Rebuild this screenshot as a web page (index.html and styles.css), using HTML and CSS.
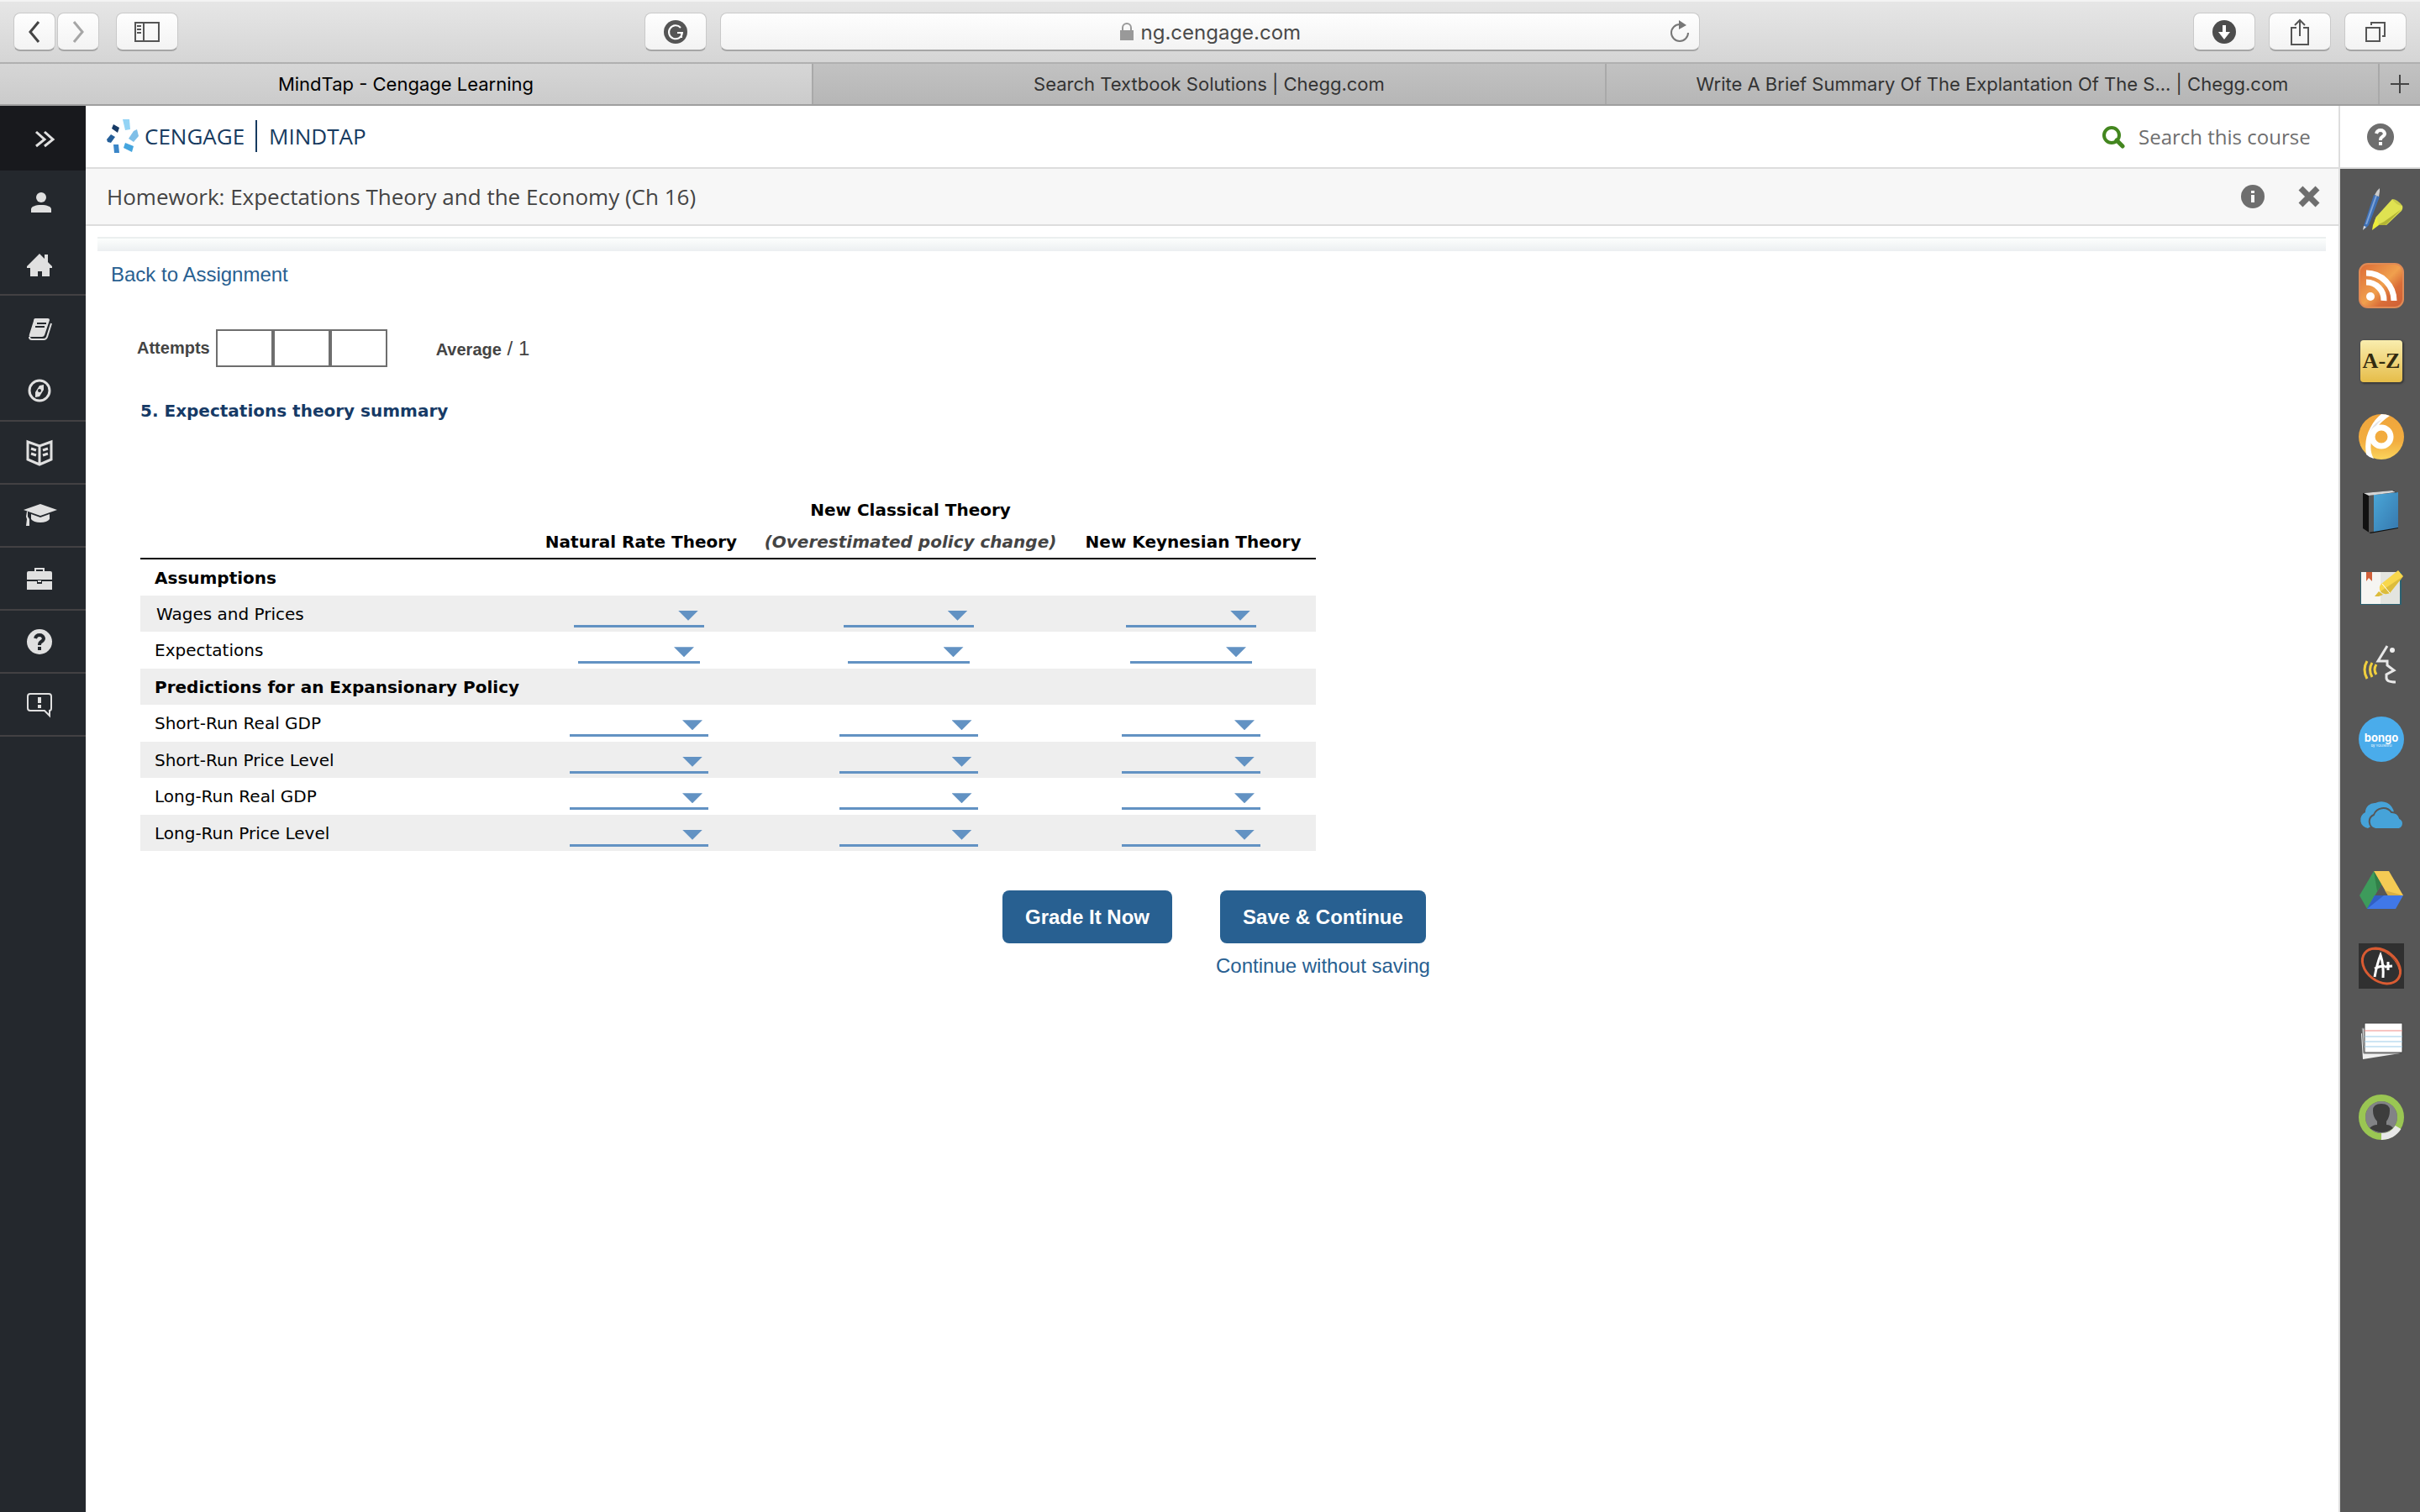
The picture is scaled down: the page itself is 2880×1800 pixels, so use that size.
FILE: index.html
```html
<!DOCTYPE html>
<html lang="en">
<head>
  <title>MindTap - Cengage Learning</title>
  <meta charset="utf-8">
  <meta name="viewport" content="width=device-width, initial-scale=1">
  <link rel="stylesheet" href="styles.css">
</head>

<body>
  <!-- browser bar -->
  <div class="toolbar">
    <div class="tools">
      <div class="pair">
        <button class="tool narrow" aria-label="Back"><svg width="28" height="28" viewBox="0 0 28 28"><path d="M19 2L9 14l10 12" fill="none" stroke="#444" stroke-width="3"/></svg></button>
        <button class="tool narrow" aria-label="Forward"><svg width="28" height="28" viewBox="0 0 28 28"><path d="M9 2l10 12L9 26" fill="none" stroke="#a6a6a6" stroke-width="3"/></svg></button>
      </div>
      <button class="tool" aria-label="Show sidebar"><svg width="32" height="26" viewBox="0 0 32 26"><path d="M2 2h28v22H2zM12 2v22" fill="none" stroke="#555" stroke-width="2"/><path d="M4 6h5M4 10h5M4 14h5" stroke="#555" stroke-width="2"/></svg></button>
      <button class="tool push" aria-label="Grammarly"><svg width="30" height="30" viewBox="0 0 30 30"><circle cx="15" cy="15" r="14" fill="#555"/><path d="M21 10a8 8 0 1 0 2 6h-6M22 15v7" fill="none" stroke="#fff" stroke-width="2"/></svg></button>
    </div>
    <div class="address">
      <svg width="18" height="22" viewBox="0 0 18 22"><path d="M1 9h16v12H1z" fill="#999"/><path d="M4 10V6a5 5 0 0 1 10 0v4" fill="none" stroke="#999" stroke-width="2"/></svg>
      <input class="url" type="text" value="ng.cengage.com" aria-label="Address">
      <button class="reload" aria-label="Reload"><svg width="26" height="28" viewBox="0 0 26 28"><path d="M13 5a10 10 0 1 0 10 10" fill="none" stroke="#777" stroke-width="2"/><path d="M12 0l9 6-9 5z" fill="#777"/></svg></button>
    </div>
    <div class="tools right">
      <button class="tool" aria-label="Downloads"><svg width="30" height="30" viewBox="0 0 30 30"><circle cx="15" cy="15" r="14" fill="#4d4d4d"/><path d="M15 7v9" stroke="#fff" stroke-width="4"/><path d="M8 15h14l-7 9z" fill="#fff"/></svg></button>
      <button class="tool" aria-label="Share"><svg width="30" height="34" viewBox="0 0 30 34"><path d="M11 12H5v20h20V12h-6M15 22V3M9 9l6-6 6 6" fill="none" stroke="#555" stroke-width="2"/></svg></button>
      <button class="tool" aria-label="Show all tabs"><svg width="28" height="28" viewBox="0 0 28 28"><path d="M3 9h16v16H3z" fill="none" stroke="#555" stroke-width="2"/><path d="M9 6V3h16v16h-3" fill="none" stroke="#555" stroke-width="2"/></svg></button>
    </div>
  </div>
  <div class="tabs">
    <a href="#" class="tab active">MindTap - Cengage Learning</a>
    <a href="#" class="tab">Search Textbook Solutions | Chegg.com</a>
    <a href="#" class="tab">Write A Brief Summary Of The Explantation Of The S... | Chegg.com</a>
    <button class="newtab" aria-label="New tab"><svg width="24" height="24" viewBox="0 0 24 24"><path d="M12 1v22M1 12h22" stroke="#444" stroke-width="2"/></svg></button>
  </div>

  <div class="page">
    <nav class="sidebar">
      <a href="#" class="expand" aria-label="Expand"><svg width="44" height="44" viewBox="0 0 44 44"><path d="M18 14l10 9-10 8M28 14l10 9-10 8" fill="none" stroke="#e0e0e0" stroke-width="3"/></svg></a>
      <a href="#" class="first" aria-label="Profile"><svg width="44" height="44" viewBox="0 0 44 44"><circle cx="24" cy="17" r="6"/><path d="M12 35v-4c0-3 5-5 12-5s12 2 12 5v4z"/></svg></a>
      <a href="#" class="line" aria-label="Home"><svg width="44" height="44" viewBox="0 0 44 44"><path d="M22 10l6 6v-5h4v9l5 5v2h-3v10H25v-6h-5v6h-9V27H7v-2z"/></svg></a>
      <a href="#" aria-label="Course book"><svg width="44" height="44" viewBox="0 0 44 44"><path d="M17 11h15q2 0 2 2l-6 18q-1 2-3 2H11q-2 0-1-3l5-16q0-3 2-3z"/><path d="M36 17l-5 16q-1 3-4 3H13q-3 0-3-3" fill="none" stroke="#e0e0e0" stroke-width="2"/><path d="M19 17h11M17 21h11" stroke="#24282d" stroke-width="2"/></svg></a>
      <a href="#" class="line" aria-label="Explore"><svg width="44" height="44" viewBox="0 0 44 44"><circle cx="22" cy="23" r="12" fill="none" stroke="#e0e0e0" stroke-width="3"/><path d="M27 16v6l-5 8-5 1v-6l5-8z"/><circle cx="22" cy="23" r="2" fill="#24282d"/></svg></a>
      <a href="#" class="line" aria-label="Reader"><svg width="44" height="44" viewBox="0 0 44 44"><path d="M8 9l14 5 14-5v21l-14 6-14-6zM22 14v22M12 17l6 2M12 23l6 2M32 17l-6 2M32 23l-6 2" fill="none" stroke="#e0e0e0" stroke-width="3"/></svg></a>
      <a href="#" class="line" aria-label="Grades"><svg width="44" height="44" viewBox="0 0 44 44"><path d="M3 15l20-7 20 7-20 7z"/><path d="M12 20l11 4 11-4v6q-3 4-11 4t-11-4z"/><path d="M8 17v6l2 3v8H6l1-8-1-3 1-6z"/></svg></a>
      <a href="#" class="line" aria-label="Portfolio"><svg width="44" height="44" viewBox="0 0 44 44"><path d="M9 13h26q2 0 2 2v8H7v-8q0-2 2-2zM7 25h12v3h6v-3h12v10H7z"/><path d="M17 14v-4h10v4" fill="none" stroke="#e0e0e0" stroke-width="2"/><path d="M20 24h4v2h-4z"/></svg></a>
      <a href="#" class="line" aria-label="Help"><svg width="44" height="44" viewBox="0 0 44 44"><circle cx="22" cy="22" r="15"/><path d="M17 18q1-4 5-4t5 4q0 2-3 4-2 1-2 4" fill="none" stroke="#24282d" stroke-width="4"/><path d="M20 28h4v4h-4z" fill="#24282d"/></svg></a>
      <a href="#" class="line" aria-label="Feedback"><svg width="44" height="44" viewBox="0 0 44 44"><path d="M11 9h22q3 0 3 3v14q0 3-2 3v6l-6-6H11q-3 0-3-3V12q0-3 3-3z" fill="none" stroke="#e0e0e0" stroke-width="2"/><path d="M20 13h4v7h-4zM20 22h4v4h-4z"/></svg></a>
    </nav>

    <main class="main">
      <header class="header">
        <a href="#" class="brand">
          <svg width="38" height="40" viewBox="0 0 38 40"><path d="M19 0h8l1 12-6 1z" fill="#94d4f5"/><path d="M36 12l2 8-6 7-6-4 6-9z" fill="#7fbfe8"/><path d="M22 28l10 4-2 7-10-5z" fill="#45a5de"/><path d="M8 30h6l1 10H9z" fill="#3b86c8"/><path d="M0 24l5-6 5 3-5 7-4-1z" fill="#255f99"/><path d="M8 6l7 4-2 6-7-5z" fill="#163a66"/></svg>
          <span>CENGAGE</span>
          <span class="product">MINDTAP</span>
        </a>
        <label class="search">
          <svg width="28" height="28" viewBox="0 0 28 28"><circle cx="12" cy="12" r="9" fill="none" stroke="#43861f" stroke-width="4"/><path d="M18 18l7 7" stroke="#43861f" stroke-width="5" stroke-linecap="round"/></svg>
          <input type="text" placeholder="Search this course" aria-label="Search this course">
        </label>
      </header>

      <div class="titlebar">
        <h1>Homework: Expectations Theory and the Economy (Ch 16)</h1>
        <button class="plain" aria-label="Information"><svg width="28" height="28" viewBox="0 0 28 28"><circle cx="14" cy="14" r="14" fill="#6e6e6e"/><path d="M12 7h4v3h-4zM12 12h4v9h-4z" fill="#f7f7f7"/></svg></button>
        <button class="plain" aria-label="Close"><svg width="28" height="28" viewBox="0 0 28 28"><path d="M4 4l20 20M24 4L4 24" stroke="#6e6e6e" stroke-width="7"/></svg></button>
      </div>

      <div class="band"></div>

      <div class="content">
        <a href="#" class="back">Back to Assignment</a>

        <div class="attempts">
          <b>Attempts</b>
          <div class="boxes"><span></span><span></span><span></span></div>
          <div class="average"><b>Average</b> / 1</div>
        </div>

        <h2>5. Expectations theory summary</h2>

        <table class="theory">
          <colgroup><col class="c1"><col class="c2"><col class="c3"><col class="c4"></colgroup>
          <thead>
            <tr>
              <th></th>
              <th>Natural Rate Theory</th>
              <th>New Classical Theory<br><em>(Overestimated policy change)</em></th>
              <th>New Keynesian Theory</th>
            </tr>
          </thead>
          <tbody>
            <tr><th colspan="4">Assumptions</th></tr>
            <tr class="mid">
              <td class="indent">Wages and Prices</td>
              <td><span class="pick"><select aria-label="Wages and Prices, Natural Rate"><option></option></select></span></td>
              <td><span class="pick"><select aria-label="Wages and Prices, New Classical"><option></option></select></span></td>
              <td><span class="pick"><select aria-label="Wages and Prices, New Keynesian"><option></option></select></span></td>
            </tr>
            <tr class="short">
              <td>Expectations</td>
              <td><span class="pick"><select aria-label="Expectations, Natural Rate"><option></option></select></span></td>
              <td><span class="pick"><select aria-label="Expectations, New Classical"><option></option></select></span></td>
              <td><span class="pick"><select aria-label="Expectations, New Keynesian"><option></option></select></span></td>
            </tr>
            <tr><th colspan="4">Predictions for an Expansionary Policy</th></tr>
            <tr>
              <td>Short-Run Real GDP</td>
              <td><span class="pick"><select aria-label="Short-Run Real GDP, Natural Rate"><option></option></select></span></td>
              <td><span class="pick"><select aria-label="Short-Run Real GDP, New Classical"><option></option></select></span></td>
              <td><span class="pick"><select aria-label="Short-Run Real GDP, New Keynesian"><option></option></select></span></td>
            </tr>
            <tr>
              <td>Short-Run Price Level</td>
              <td><span class="pick"><select aria-label="Short-Run Price Level, Natural Rate"><option></option></select></span></td>
              <td><span class="pick"><select aria-label="Short-Run Price Level, New Classical"><option></option></select></span></td>
              <td><span class="pick"><select aria-label="Short-Run Price Level, New Keynesian"><option></option></select></span></td>
            </tr>
            <tr>
              <td>Long-Run Real GDP</td>
              <td><span class="pick"><select aria-label="Long-Run Real GDP, Natural Rate"><option></option></select></span></td>
              <td><span class="pick"><select aria-label="Long-Run Real GDP, New Classical"><option></option></select></span></td>
              <td><span class="pick"><select aria-label="Long-Run Real GDP, New Keynesian"><option></option></select></span></td>
            </tr>
            <tr>
              <td>Long-Run Price Level</td>
              <td><span class="pick"><select aria-label="Long-Run Price Level, Natural Rate"><option></option></select></span></td>
              <td><span class="pick"><select aria-label="Long-Run Price Level, New Classical"><option></option></select></span></td>
              <td><span class="pick"><select aria-label="Long-Run Price Level, New Keynesian"><option></option></select></span></td>
            </tr>
          </tbody>
        </table>

        <div class="actions">
          <button class="button">Grade It Now</button>
          <div class="save">
            <button class="button">Save &amp; Continue</button>
            <a href="#">Continue without saving</a>
          </div>
        </div>
      </div>
    </main>

    <aside class="apps">
      <a href="#" class="help" aria-label="Help"><svg width="32" height="32" viewBox="0 0 32 32"><circle cx="16" cy="16" r="16" fill="#6e6e6e"/><path d="M11 12q1-4 5-4t5 4q0 2-3 4-2 1-2 4" fill="none" stroke="#fff" stroke-width="4"/><path d="M14 22h4v4h-4z" fill="#fff"/></svg></a>
      <div class="applist">
        <!-- pen and highlighter -->
        <a href="#" aria-label="Highlighter"><svg width="54" height="54" viewBox="0 0 54 54"><path d="M18 9l7 2-13 34-5 5-1-4z" fill="#3e70b5"/><path d="M21 10L9 44" stroke="#7da3d8" stroke-width="2"/><path d="M19 9l3-5 3-3v4l-1 6z" fill="#ccc"/><path d="M6 46l3 1-4 4z" fill="#ddd"/><path d="M40 14l12 8q1 3-1 6L33 45H22l-3-5 2-5z" fill="#dfe251"/><path d="M51 26L32 45H22l8-4z" fill="#b3b535"/><path d="M21 35l-4 10-1 6 8-6z" fill="#eded3a"/><path d="M40 14q6 0 12 8-8-1-12-8z" fill="#c9cc4a"/></svg></a>
        <a href="#" aria-label="RSS feed"><svg width="54" height="54" viewBox="0 0 54 54"><defs><linearGradient id="rss" x2="1" y2="1"><stop offset="0" stop-color="#dc6a35"/><stop offset=".5" stop-color="#f0a04e"/><stop offset=".7" stop-color="#d96d38"/><stop offset="1" stop-color="#cd5e36"/></linearGradient></defs><rect x="1" y="1" width="52" height="52" rx="10" fill="url(#rss)" stroke="#e08a55" stroke-width="2"/><circle cx="14" cy="40" r="5" fill="#fff"/><path d="M9 23a21 21 0 0 1 21 22M9 12a33 33 0 0 1 33 33" fill="none" stroke="#fff" stroke-width="7"/></svg></a>
        <a href="#" aria-label="Glossary"><span class="az">A-Z</span></a>
        <a href="#" aria-label="Polls"><svg width="54" height="54" viewBox="0 0 54 54"><defs><linearGradient id="pol" x2="0" y2="1"><stop offset="0" stop-color="#f0a53c"/><stop offset=".6" stop-color="#f2ad40"/><stop offset="1" stop-color="#fbd45c"/></linearGradient></defs><circle cx="27" cy="27" r="27" fill="url(#pol)"/><path d="M27 0q6 0 10 2Q20 13 16 28t2 25q-5-1-9-5-3-18 5-32Q19 6 27 0z" fill="#fff"/><path d="M28 6Q15 12 13 25q8-13 15-19z" fill="#e3e3e6"/><circle cx="27" cy="27" r="11" fill="none" stroke="#fff" stroke-width="7"/></svg></a>
        <a href="#" aria-label="Book"><svg width="54" height="54" viewBox="0 0 54 54"><defs><linearGradient id="bk" x2="1" y2="1"><stop offset="0" stop-color="#4aa7d8"/><stop offset="1" stop-color="#3678ae"/></linearGradient></defs><path d="M5 4l36-3 6 3v42L14 52l-9-6z" fill="#111"/><path d="M12 7l6-1v44l-6 1z" fill="#555"/><path d="M18 6l29-3v42l-29 5z" fill="url(#bk)"/><path d="M6 4l34-3 4 2-32 4z" fill="#d5d5d5"/></svg></a>
        <a href="#" aria-label="Notes"><svg width="54" height="54" viewBox="0 0 54 54"><path d="M2 8h49v39H2z" fill="#2c6373"/><path d="M3 8h23v38H3z" fill="#f6f5f2"/><path d="M26 8h23v38H26z" fill="#e3e4df"/><path d="M9 8h7v11l-4-4-3 4z" fill="#d1603a"/><path d="M47 6l6 7-16 20q-7 3-11-2-3-5 1-9z" fill="#f8d74c"/><path d="M53 13L37 33q-7 3-11-2z" fill="#dcbc3c"/><path d="M24 31l5 4-5 2h-5z" fill="#dcbc3c"/><path d="M28 22l9 11" stroke="#fff" stroke-width="1"/></svg></a>
        <a href="#" aria-label="Read aloud"><svg width="54" height="54" viewBox="0 0 54 54"><path d="M34 6L23 24h11v5l8 6-9 5v4q0 5 11 5" fill="none" stroke="#e8e8e8" stroke-width="3"/><circle cx="40" cy="11" r="3" fill="#eee"/><path d="M10 24q-6 10 0 21M16 26q-5 8 0 17M21 28q-4 6 0 12" fill="none" stroke="#f0cf3e" stroke-width="3"/></svg></a>
        <a href="#" class="bongo" aria-label="Bongo"><strong>bongo</strong><small>by YOUSEEU</small></a>
        <a href="#" aria-label="OneDrive"><svg width="54" height="54" viewBox="0 0 54 54"><path d="M11 43a10 10 0 0 1-3-19 11 11 0 0 1 12-11 15 15 0 0 1 22 11z" fill="#46a3d9"/><path d="M20 44a9 9 0 0 1-2-17 12 12 0 0 1 21-3 10 10 0 0 1 10 7 7 7 0 0 1-1 13z" fill="#46a3d9" stroke="#575757" stroke-width="2"/></svg></a>
        <a href="#" aria-label="Google Drive"><svg width="54" height="54" viewBox="0 0 54 54"><path d="M18 4l9 16-17 29L1 33z" fill="#3d9b5b"/><path d="M18 4h18l17 29H35z" fill="#f5cb54"/><path d="M19 33h34l-9 16H10z" fill="#4078e8"/><path d="M18 4l9 16-5 8z" fill="#318049"/><path d="M31 27l22 6H35z" fill="#d8ae45"/><path d="M10 49l9-16h11z" fill="#315fc4"/></svg></a>
        <a href="#" aria-label="Grades"><svg width="54" height="54" viewBox="0 0 54 54"><path d="M0 0h54v54H0z" fill="#303030"/><ellipse cx="27" cy="27" rx="25" ry="18" transform="rotate(38 27 27)" fill="none" stroke="#d95b32" stroke-width="3"/><path d="M10 9Q24 3 38 15q12 12 11 24-1 8-12 8" fill="none" stroke="#d95b32" stroke-width="1"/><path d="M19 40q3-16 7-26 4 12 3 27M19 30q6-3 12-3M31 28l9-1M35 22v10" fill="none" stroke="#fff" stroke-width="3"/></svg></a>
        <a href="#" aria-label="Flashcards"><svg width="54" height="54" viewBox="0 0 54 54"><path d="M3 17l46 24-44 7z" fill="#f0f0f0"/><path d="M4 11h44v30H6z" fill="#ccc" stroke="#777"/><path d="M7 5h45v35H7z" fill="#fff" stroke="#444"/><path d="M7 14h45" stroke="#f08a85" stroke-width="1"/><path d="M7 21h45M7 27h45M7 33h45" stroke="#9bcbe8" stroke-width="1"/></svg></a>
        <a href="#" aria-label="Account"><svg width="54" height="54" viewBox="0 0 54 54"><circle cx="27" cy="27" r="19" fill="#828386"/><path d="M13 40q4-4 9-4v-4q-5-5-5-13 0-8 10-8t10 8q0 8-4 13v4q5 0 8 4-13 10-28 0z" fill="#3d3d3d"/><circle cx="27" cy="27" r="23" fill="none" stroke="#9ac653" stroke-width="8"/><path d="M27 50a23 23 0 0 0 20-11" fill="none" stroke="#e8e8e8" stroke-width="8"/></svg></a>
      </div>
    </aside>
  </div>
</body>

</html>
```
FILE: styles.css
```css
* {
  box-sizing: border-box;
}
html {
  font-family: "Liberation Sans", Arial, Helvetica, sans-serif;
  font-size: 24px;
}
body {
  margin: 0;
  min-height: 100vh;
  display: flex;
  flex-direction: column;
  background-color: #fff;
}
svg {
  display: block;
  flex: none;
}
button, input, select {
  font: inherit;
  margin: 0;
  padding: 0;
  border: none;
  background: none;
  outline: none;
}
a {
  color: #286091;
  text-decoration: none;
}

/* browser bar */
.toolbar {
  display: grid;
  grid-template-columns: 1fr 40.5% 1fr;
  align-items: center;
  height: 76px;
  background: linear-gradient(#e6e6e6, #d5d5d5);
  border-top: 2px solid #f3f3f3;
  border-bottom: 2px solid #b0b0b0;
  font-family: Inter, Roboto, sans-serif;
}
.tools {
  display: flex;
  gap: 20px;
  padding: 0 16px;
}
.right {
  justify-content: flex-end;
  gap: 16px;
}
.pair {
  display: flex;
  gap: 2px;
}
.tool {
  display: flex;
  align-items: center;
  justify-content: center;
  width: 74px;
  height: 46px;
  border: 1px solid #c9c9c9;
  border-bottom: 2px solid #a6a6a6;
  border-radius: 8px;
  background: linear-gradient(#fefefe, #f3f3f3);
}
.narrow {
  width: 50px;
}
.push {
  margin-left: auto;
}
.address {
  display: flex;
  align-items: center;
  gap: 7px;
  height: 46px;
  padding-right: 10px;
  border: 1px solid #c9c9c9;
  border-bottom: 2px solid #a6a6a6;
  border-radius: 8px;
  background: linear-gradient(#fefefe, #f3f3f3);
}
.address > svg {
  margin-left: auto;
}
.url {
  width: 200px;
  padding-top: 2px;
  font-size: 24px;
  color: #4a4a4a;
}
.reload {
  margin-left: auto;
}
.address::before {
  content: "";
  width: 46px;
}
.tabs {
  display: flex;
  height: 50px;
  border-bottom: 2px solid #9f9f9f;
  background: linear-gradient(#c2c2c2, #b6b6b6);
  font-family: Inter, Roboto, sans-serif;
  font-size: 22px;
}
.tab {
  flex: 944;
  display: flex;
  align-items: center;
  justify-content: center;
  white-space: nowrap;
  color: #333;
  border-right: 2px solid #a9a9a9;
}
.tab:nth-child(3) {
  flex: 920;
}
.tab.active {
  flex: 968;
  color: #000;
  background: linear-gradient(#d6d6d6, #cbcbcb);
}
.newtab {
  display: flex;
  align-items: center;
  justify-content: center;
  width: 48px;
}

/* page frame */
.page {
  flex: 1;
  display: flex;
}
.sidebar {
  width: 102px;
  background-color: #24282d;
}
.sidebar a {
  display: flex;
  align-items: center;
  height: 75px;
  padding-left: 25px;
  fill: #e0e0e0;
}
.sidebar .expand {
  height: 77px;
  background-color: #18191d;
}
.sidebar .first {
  height: 74px;
}
.sidebar .line {
  border-bottom: 2px solid #434143;
}
.main {
  flex: 1;
}
.header {
  display: flex;
  align-items: center;
  justify-content: space-between;
  height: 75px;
  padding: 0 32px 0 25px;
  border-bottom: 2px solid #ddd;
  font-family: "Open Sans", "Noto Sans", sans-serif;
  font-size: 26px;
}
.brand {
  display: flex;
  align-items: center;
  gap: 7px;
  padding-bottom: 2px;
  color: #163a60;
}
.product {
  line-height: 38px;
  margin-left: 6px;
  padding-left: 14px;
  border-left: 2px solid #163a60;
}
.search {
  display: flex;
  align-items: center;
  gap: 16px;
}
.search input {
  width: 206px;
  font-size: 24px;
}
.search input::placeholder {
  color: #6e6e6e;
  opacity: 1;
}
.titlebar {
  display: flex;
  align-items: center;
  gap: 39px;
  height: 68px;
  padding: 0 21px 0 25px;
  background-color: #f7f7f7;
  border-bottom: 2px solid #ddd;
}
.titlebar h1 {
  flex: 1;
  margin: 0;
  font: 26px "Open Sans", "Noto Sans", sans-serif;
  color: #444;
}
.band {
  height: 17px;
  margin: 13px 15px 0 14px;
  border-top: 2px solid #ebefef;
  background: linear-gradient(#fcfefd, #eceff1);
}

/* assignment */
.content {
  padding: 12px 30px;
}
.back {
  display: block;
  line-height: 32px;
}
.attempts {
  display: flex;
  align-items: center;
  margin: 49px 0 0 31px;
  height: 45px;
  color: #444;
}
.attempts b {
  font-size: 20px;
}
.boxes {
  display: flex;
  margin-left: 7px;
}
.boxes span {
  width: 68px;
  height: 45px;
  border: 2px solid #6e6e6e;
}
.average {
  margin-left: 58px;
}
.content h2 {
  margin: 36px 0 0 35px;
  font: bold 20px/32px "DejaVu Sans", Verdana, sans-serif;
  color: #163a66;
}
.theory {
  width: 1399px;
  max-width: 100%;
  margin: 83px 0 0 35px;
  table-layout: fixed;
  border-collapse: collapse;
  font: 20px/38px "DejaVu Sans", Verdana, sans-serif;
}
.c1 {
  width: 466px;
}
.c2 {
  width: 260px;
}
.c3 {
  width: 381px;
}
.c4 {
  width: 292px;
}
.theory thead th {
  padding: 0;
  vertical-align: bottom;
  white-space: nowrap;
  border-bottom: 2px solid #000;
}
.theory em {
  color: #444;
}
.theory tbody tr {
  height: 44px;
}
.theory tbody tr:nth-child(even) {
  height: 43px;
  background-color: #eee;
}
.theory tbody th, .theory td {
  padding: 0 17px;
  text-align: left;
  line-height: 32px;
}
.theory td:not(:first-child) {
  padding: 0 5px 0 0;
  text-align: center;
}
.theory .indent {
  padding-left: 19px;
}
/* drop-down: underline with the arrow laid over the native select */
.pick {
  display: inline-grid;
  align-items: center;
  width: 165px;
  height: 30px;
  border-bottom: 3px solid #6292c3;
  vertical-align: middle;
}
.mid .pick {
  width: 155px;
}
.short .pick {
  width: 145px;
}
.pick select, .pick::after {
  grid-area: 1 / 1;
}
.pick select {
  width: 100%;
  height: 100%;
  appearance: none;
}
.pick::after {
  content: "";
  justify-self: end;
  width: 24px;
  height: 12px;
  margin-right: 7px;
  background-color: #6292c3;
  clip-path: polygon(0 0, 100% 0, 50% 100%);
  pointer-events: none;
}
.actions {
  display: flex;
  align-items: flex-start;
  gap: 52px;
  margin: 47px 0 0 1061px;
}
.save {
  display: flex;
  flex-direction: column;
  align-items: center;
  gap: 13px;
}
.button {
  height: 63px;
  padding: 0 27px;
  border-radius: 8px;
  font-weight: bold;
  color: #fff;
  background-color: #286091;
}
.button:hover {
  background-color: #1d4a72;
}

/* app dock */
.apps {
  width: 97px;
  border-left: 2px solid #ddd;
  background-color: #575757;
}
.help {
  display: flex;
  align-items: center;
  justify-content: center;
  height: 75px;
  background-color: #fff;
  border-bottom: 2px solid #ddd;
}
.applist {
  display: flex;
  flex-direction: column;
  align-items: center;
  gap: 36px;
  padding: 22px 0 36px 3px;
}
.applist a {
  display: flex;
  align-items: center;
  justify-content: center;
  width: 54px;
  height: 54px;
}
.az {
  width: 50px;
  height: 50px;
  border-radius: 4px;
  background: linear-gradient(#f9edae, #e6bd49);
  box-shadow: 1px 1px 2px 1px #3a3a3a;
  font: bold 26px/50px "Liberation Serif", serif;
  text-align: center;
  color: #332b10;
}
.applist .bongo {
  flex-direction: column;
  border-radius: 50%;
  background-color: #4aaceb;
  color: #fff;
}
.bongo strong {
  font: bold 13px/14px Inter, sans-serif;
}
.bongo small {
  font: 4px/5px Inter, sans-serif;
}
```
